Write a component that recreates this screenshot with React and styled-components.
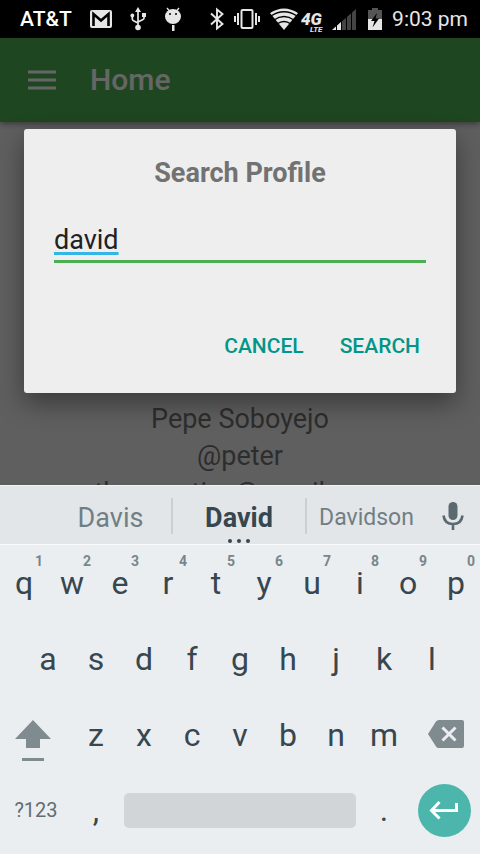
import React, { useState } from "react";
import styled, { createGlobalStyle } from "styled-components";

const GlobalStyle = createGlobalStyle`
  * { box-sizing: border-box; }
  body { margin: 0; font-family: Roboto, sans-serif; background: #ebeef1; }
  button, input { font-family: inherit; }
  button { border: 0; padding: 0; margin: 0; background: none; cursor: pointer; color: inherit; }
  h1, h2, p { margin: 0; }
  svg { display: block; flex: none; overflow: visible; }
`;

const Screen = styled.div`
  display: flex;
  flex-direction: column;
  height: 100vh;
`;

const StatusBar = styled.div`
  flex: none;
  display: flex;
  align-items: center;
  justify-content: space-between;
  height: 38px;
  padding: 0 12px 0 20px;
  background: #000;
  color: #e6e6e6;
`;

const StatusGroup = styled.div`
  display: flex;
  align-items: center;
  gap: ${(p) => p.$gap}px;
`;

const StatusText = styled.span`
  font-size: 21px;
  line-height: 24px;
  font-weight: ${(p) => (p.$strong ? 500 : 400)};
  color: ${(p) => (p.$strong ? "#fff" : "#e6e6e6")};
`;

const Stage = styled.main`
  position: relative;
  flex: 1;
  min-height: 0;
  display: flex;
  flex-direction: column;
  overflow: hidden;
  background: #eee;
`;

const AppBar = styled.header`
  flex: none;
  display: flex;
  align-items: center;
  gap: 34px;
  height: 84px;
  padding: 0 28px;
  background: #4caf50;
  box-shadow: 0 2px 6px rgba(0, 0, 0, 0.4);
  color: #fff;
`;

const AppTitle = styled.h1`
  font-size: 30px;
  line-height: 36px;
  font-weight: 500;
`;

const Profile = styled.section`
  padding-top: 279px;
  text-align: center;
  font-size: 27px;
  line-height: 37px;
  color: #727272;
`;

const Scrim = styled.div`
  position: absolute;
  inset: 0;
  display: flex;
  align-items: center;
  padding: 0 24px 2px;
  background: rgba(0, 0, 0, 0.6);
`;

const Dialog = styled.form`
  flex: 1;
  display: flex;
  flex-direction: column;
  padding: 26px 30px 23px;
  border-radius: 3px;
  background: #eee;
  box-shadow: 0 10px 26px rgba(0, 0, 0, 0.4);
`;

const DialogTitle = styled.h2`
  font-size: 27px;
  line-height: 36px;
  font-weight: 700;
  text-align: center;
  color: #727272;
`;

const SearchInput = styled.input`
  width: 100%;
  height: 44px;
  margin: 28px 0 59px;
  padding: 1px 0 0;
  border: 0;
  border-bottom: 3px solid #4caf50;
  border-radius: 0;
  outline: 0;
  background: none;
  font-size: 27px;
  line-height: 36px;
  color: #212121;
  text-decoration: underline 3px #33b5e5;
  text-underline-offset: 3px;
  text-decoration-skip-ink: none;
`;

const DialogActions = styled.div`
  display: flex;
  justify-content: flex-end;
  gap: 36px;
  padding-right: 6px;
`;

const DialogButton = styled.button`
  height: 48px;
  font-size: 21px;
  line-height: 24px;
  font-weight: 500;
  color: #009688;
`;

const Keyboard = styled.section`
  flex: none;
  padding-bottom: 7px;
  background: #ebeef1;
  color: #37474f;
`;

const Suggestions = styled.div`
  display: grid;
  grid-template-columns: 1fr 134px 1fr 54px;
  align-items: center;
  height: 60px;
  padding-top: 2px;
  padding-left: 50px;
  border-top: 1px solid #f1f3f4;
  border-bottom: 1px solid #f8fafb;
  background: #e3e6e9;
`;

const Suggestion = styled.button`
  position: relative;
  height: 36px;
  border-left: ${(p) => (p.$first ? 0 : "2px solid #cbcfd2")};
  font-size: ${(p) => (p.$long ? 23 : 27)}px;
  line-height: 36px;
  padding-top: 2px;
  font-weight: ${(p) => (p.$main ? 700 : 400)};
  color: ${(p) => (p.$main ? "#37474f" : "#717f84")};
  white-space: nowrap;
`;

const MoreDots = styled.span`
  position: absolute;
  left: 0;
  right: 0;
  bottom: -9px;
  display: flex;
  justify-content: center;
  gap: 5px;

  &::before,
  &::after,
  i {
    content: "";
    width: 4px;
    height: 4px;
    border-radius: 50%;
    background: #37474f;
  }
`;

const IconButton = styled.button`
  display: flex;
  align-items: center;
  justify-content: center;
  height: 100%;
`;

const KeyRow = styled.div`
  display: grid;
  grid-template-columns: ${(p) => p.$columns};
  height: ${(p) => (p.$last ? 74 : 76)}px;
  padding: 0 ${(p) => (p.$inset ? "5%" : "0")};
`;

const Key = styled.button`
  position: relative;
  display: flex;
  align-items: center;
  justify-content: center;
  padding: ${(p) => p.$pad || 0};
  font-size: ${(p) => (p.$small ? 20 : 32)}px;
  line-height: 36px;
  color: ${(p) => (p.$small ? "#5f6d73" : "#37474f")};
`;

const Hint = styled.sup`
  position: absolute;
  top: 8px;
  right: 5px;
  font-size: 14px;
  line-height: 16px;
  font-weight: 700;
  color: #78868b;
`;

const SpaceBar = styled.span`
  flex: 1;
  height: 35px;
  margin: 0 4px;
  border-radius: 5px;
  background: #d1d5d8;
`;

const EnterDisc = styled.span`
  display: flex;
  align-items: center;
  justify-content: center;
  width: 53px;
  height: 53px;
  border-radius: 50%;
  background: #4db6ac;
`;

const MailIcon = () => (
  <svg width="22" height="18" viewBox="0 0 22 18">
    <rect width="22" height="18" rx="2" fill="#e6e6e6" />
    <path d="M3.500 16V4L11 10.500L18.500 4V16" fill="none" stroke="#000" strokeWidth="2.600" />
  </svg>
);

const UsbIcon = () => (
  <svg width="16" height="24" viewBox="0 0 16 24" fill="#e6e6e6">
    <path d="M8 0l3 5H5z" />
    <circle cx="8" cy="20.500" r="2.800" />
    <circle cx="2.300" cy="8.500" r="1.900" />
    <rect x="12" y="6" width="4" height="4" />
    <path d="M8 4V20M2.300 8V12Q2.300 13 3.500 13.700L8 16M14 9V11Q14 12 13 12.500L8 15" fill="none" stroke="#e6e6e6" strokeWidth="1.700" />
  </svg>
);

const DebugIcon = () => (
  <svg width="18" height="24" viewBox="0 0 18 24">
    <path d="M3 1L5.500 4M15 1L12.500 4" stroke="#e6e6e6" strokeWidth="1.300" />
    <ellipse cx="9" cy="9.500" rx="8" ry="7.500" fill="#e6e6e6" />
    <rect x="8" y="18" width="2.500" height="6" fill="#e6e6e6" />
    <circle cx="6" cy="7" r="1" />
    <circle cx="12" cy="7" r="1" />
  </svg>
);

const BluetoothIcon = () => (
  <svg width="14" height="22" viewBox="0 0 14 22">
    <path d="M1 5.500L12.500 16L7 20.500V1.500L12.500 6L1 16.500" fill="none" stroke="#e6e6e6" strokeWidth="1.900" />
  </svg>
);

const VibrateIcon = () => (
  <svg width="26" height="22" viewBox="0 0 26 22" fill="none" stroke="#e6e6e6" strokeWidth="2">
    <rect x="7.500" y="2" width="11" height="18" rx="1" />
    <path d="M1 8V14M4 5V17M22 5V17M25 8V14" />
  </svg>
);

const WifiIcon = () => (
  <svg width="28" height="22" viewBox="0 0 28 22">
    <path d="M14 22L0 5Q14-4 28 5z" fill="#e6e6e6" />
    <path d="M1 8Q14-.5 27 8M4 12Q14 5 24 12M7 16Q14 11 21 16" fill="none" stroke="#000" strokeWidth="1.300" />
  </svg>
);

const NetworkIcon = () => (
  <svg width="26" height="26" viewBox="0 0 26 26" fill="#e6e6e6" fontFamily="Roboto, sans-serif" fontStyle="italic" fontWeight="900">
    <text x="-1" y="19" fontSize="17">4G</text>
    <text x="8" y="26" fontSize="8" fontWeight="700">LTE</text>
  </svg>
);

const SignalIcon = () => (
  <svg width="26" height="21" viewBox="0 0 26 21">
    <path d="M0 21L24 0V21z" fill="#444" />
    <path d="M0 21L9 13V21z" fill="#e6e6e6" />
    <path d="M4.500 0V21M9.500 0V21M14.500 0V21M19.500 0V21" stroke="#000" strokeWidth="1" />
  </svg>
);

const BatteryIcon = () => (
  <svg width="14" height="22" viewBox="0 0 14 22">
    <path d="M4 0H10V2H14V22H0V2H4z" fill="#555" />
    <path d="M0 11H14V22H0z" fill="#e6e6e6" />
    <path d="M9 5L3 13H6.500L4.500 19.500L11 10.500H7.500z" fill="#000" />
  </svg>
);

const MenuIcon = () => (
  <svg width="28" height="20" viewBox="0 0 28 20">
    <path d="M0 2H28M0 10H28M0 18H28" stroke="currentColor" strokeWidth="3" />
  </svg>
);

const MicIcon = () => (
  <svg width="22" height="30" viewBox="0 0 22 30">
    <rect x="6.500" y="1" width="9" height="18" rx="4.500" fill="#5b6a71" />
    <path d="M1.500 14.500Q2.500 23 11 23T20.500 14.500M11 23V29" fill="none" stroke="#5b6a71" strokeWidth="2.600" />
  </svg>
);

const ShiftIcon = () => (
  <svg width="36" height="42" viewBox="0 0 36 42" fill="#808b90">
    <path d="M18 0L36 19H25V28H11V19H0z" />
    <rect x="7" y="38" width="22" height="3" />
  </svg>
);

const DeleteIcon = () => (
  <svg width="36" height="28" viewBox="0 0 36 28">
    <path d="M8 1.500Q9 0 11 0H34Q36 0 36 2V26Q36 28 34 28H11Q9 28 8 26.500L0 14z" fill="#808b90" />
    <path d="M14.500 7.500L27.500 20.500M27.500 7.500L14.500 20.500" stroke="#ebeef1" strokeWidth="3" />
  </svg>
);

const EnterIcon = () => (
  <svg width="30" height="20" viewBox="0 0 30 20">
    <path d="M27.500 3V10.500H3M10.500 2L2.500 10.500L10.500 18.500" fill="none" stroke="#fff" strokeWidth="3" />
  </svg>
);

const topRow = ["q", "w", "e", "r", "t", "y", "u", "i", "o", "p"];
const middleRow = ["a", "s", "d", "f", "g", "h", "j", "k", "l"];
const lowerRow = ["z", "x", "c", "v", "b", "n", "m"];

export default function App() {
  const [query, setQuery] = useState("david");
  const type = (letter) => () => setQuery((q) => q + letter);

  return (
    <Screen>
      <GlobalStyle />
      <StatusBar>
        <StatusGroup $gap={18}>
          <StatusText $strong>AT&amp;T</StatusText>
          <MailIcon />
          <UsbIcon />
          <DebugIcon />
        </StatusGroup>
        <StatusGroup $gap={10}>
          <BluetoothIcon />
          <VibrateIcon />
          <StatusGroup $gap={4}>
            <WifiIcon />
            <NetworkIcon />
            <SignalIcon />
          </StatusGroup>
          <BatteryIcon />
          <StatusText>9:03 pm</StatusText>
        </StatusGroup>
      </StatusBar>

      <Stage>
        <AppBar>
          <IconButton type="button" aria-label="Menu">
            <MenuIcon />
          </IconButton>
          <AppTitle>Home</AppTitle>
        </AppBar>
        <Profile>
          <p>Pepe Soboyejo</p>
          <p>@peter</p>
          <p>thenegative@gmail.com</p>
        </Profile>
        <Scrim>
          <Dialog role="dialog" aria-labelledby="dialog-title" onSubmit={(e) => e.preventDefault()}>
            <DialogTitle id="dialog-title">Search Profile</DialogTitle>
            <SearchInput
              type="text"
              aria-labelledby="dialog-title"
              spellCheck={false}
              value={query}
              onChange={(e) => setQuery(e.target.value)}
            />
            <DialogActions>
              <DialogButton type="button">CANCEL</DialogButton>
              <DialogButton type="submit">SEARCH</DialogButton>
            </DialogActions>
          </Dialog>
        </Scrim>
      </Stage>

      <Keyboard aria-label="Keyboard">
        <Suggestions>
          <Suggestion type="button" $first>Davis</Suggestion>
          <Suggestion type="button" $main>
            David
            <MoreDots><i /></MoreDots>
          </Suggestion>
          <Suggestion type="button" $long>Davidson</Suggestion>
          <IconButton type="button" aria-label="Voice input">
            <MicIcon />
          </IconButton>
        </Suggestions>
        <KeyRow $columns="repeat(10, 1fr)">
          {topRow.map((letter, i) => (
            <Key key={letter} type="button" onClick={type(letter)}>
              {letter}
              <Hint>{(i + 1) % 10}</Hint>
            </Key>
          ))}
        </KeyRow>
        <KeyRow $columns="repeat(9, 1fr)" $inset>
          {middleRow.map((letter) => (
            <Key key={letter} type="button" onClick={type(letter)}>{letter}</Key>
          ))}
        </KeyRow>
        <KeyRow $columns="3fr repeat(7, 2fr) 3fr">
          <Key type="button" aria-label="Shift" $pad="12px 6px 0 0"><ShiftIcon /></Key>
          {lowerRow.map((letter) => (
            <Key key={letter} type="button" onClick={type(letter)}>{letter}</Key>
          ))}
          <Key type="button" aria-label="Delete" $pad="0 0 2px 4px" onClick={() => setQuery((q) => q.slice(0, -1))}>
            <DeleteIcon />
          </Key>
        </KeyRow>
        <KeyRow $columns="3fr 2fr 10fr 2fr 3fr" $last>
          <Key type="button" $small>?123</Key>
          <Key type="button" onClick={type(",")}>,</Key>
          <Key type="button" aria-label="Space" onClick={type(" ")}><SpaceBar /></Key>
          <Key type="button" onClick={type(".")}>.</Key>
          <Key type="button" aria-label="Enter"><EnterDisc><EnterIcon /></EnterDisc></Key>
        </KeyRow>
      </Keyboard>
    </Screen>
  );
}
